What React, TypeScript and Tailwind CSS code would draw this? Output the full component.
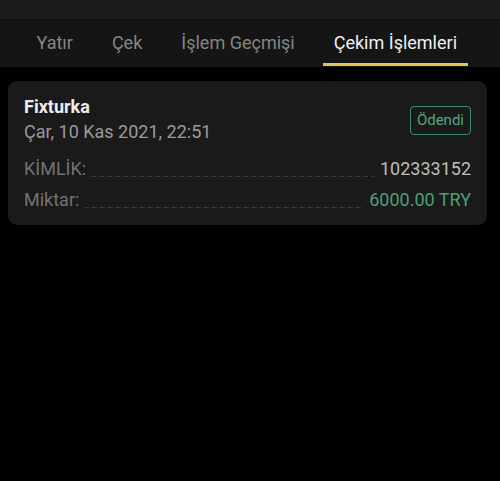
import React from "react";

const tabs = ["Yatır", "Çek", "İşlem Geçmişi", "Çekim İşlemleri"];

function Row({ label, value, valueClass }: { label: string; value: string; valueClass: string }) {
  return (
    <div className="flex items-end h-[31px]">
      <span className="text-[#727272] text-[18px] leading-[24px]">{label}</span>
      <span
        className="flex-1 mx-[5px] mb-[4px] h-[1px]"
        style={{
          backgroundImage: "repeating-linear-gradient(to right, #383838 0 5px, transparent 5px 8px)",
        }}
      />
      <span className={`text-[18px] leading-[24px] ${valueClass}`}>{value}</span>
    </div>
  );
}

export default function App() {
  const active = 3;
  return (
    <div className="w-[500px] h-[481px] bg-black font-['Roboto',sans-serif]">
      <div className="h-[19px] bg-[#1c1c1c]" />
      <div className="h-[1px] bg-[#0c0c0c]" />
      <div className="h-[47px] bg-[#151515] flex pl-[17px]">
        {tabs.map((t, i) => (
          <div key={t} className="relative px-[19.5px] flex items-center">
            <span
              className={`text-[18px] leading-[24px] pb-[2px] ${
                i === active ? "text-[#f0f0f0]" : "text-[#858585]"
              }`}
            >
              {t}
            </span>
            {i === active && (
              <span className="absolute left-[9px] right-[9px] bottom-[1px] h-[3px] bg-[#e3c54a]" />
            )}
          </div>
        ))}
      </div>
      <div className="pl-[8px] pr-[13px] pt-[14px]">
        <div className="bg-[#1a1a1a] rounded-[9px] pl-[16px] pr-[16px] pt-[14px] pb-[13px]">
          <div className="flex justify-between">
            <div>
              <div className="text-[#ececec] text-[18px] font-bold leading-[23px]">Fixturka</div>
              <div className="text-[#9a9a9a] text-[18px] leading-[27px]">Çar, 10 Kas 2021, 22:51</div>
            </div>
            <div className="mt-[11px] h-[29px] px-[6px] flex items-center border border-[#3f8c68] rounded-[4px] text-[#54a57c] text-[15px]">
              Ödendi
            </div>
          </div>
          <div className="mt-[5px]">
            <Row label="KİMLİK:" value="102333152" valueClass="text-[#bdbdbd]" />
            <Row label="Miktar:" value="6000.00 TRY" valueClass="text-[#4d9f76]" />
          </div>
        </div>
      </div>
    </div>
  );
}
